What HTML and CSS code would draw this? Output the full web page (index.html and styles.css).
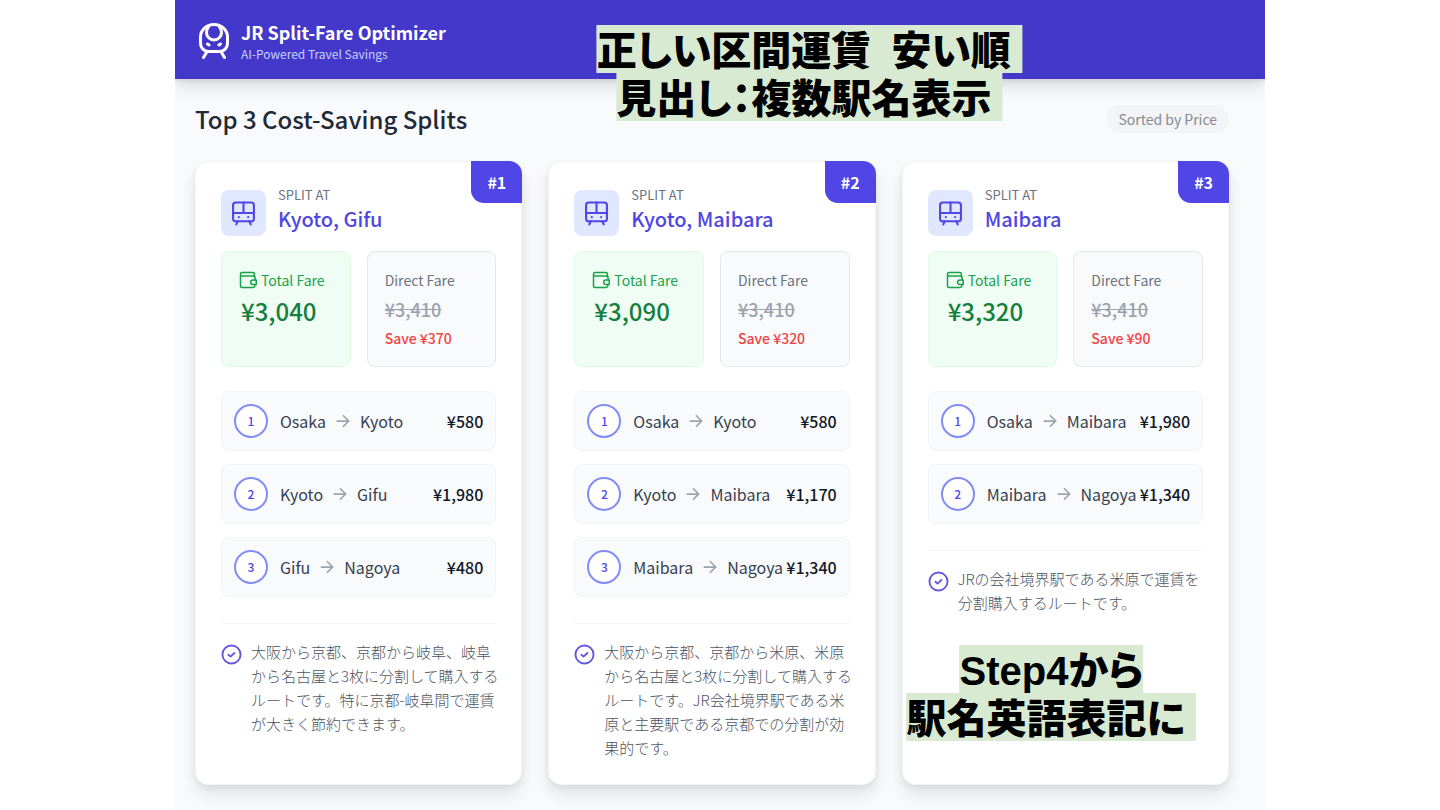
FILE: index.html
```html
<!DOCTYPE html>
<html lang="ja">
<head>
<meta charset="utf-8">
<meta name="viewport" content="width=device-width, initial-scale=1">
<title>JR Split-Fare Optimizer</title>
<link rel="stylesheet" href="styles.css">
</head>
<body>
<svg class="sprite" aria-hidden="true">
  <symbol id="i-train" viewBox="0 0 24 24"><rect x="2" y="1.500" width="20" height="18" rx="2.500"/><path d="M12 1.500v10M2 11.500h20M7.500 15.500h.01M16.500 15.500h.01M6.500 19.500l-1.500 3M17.500 19.500l1.500 3"/></symbol>
  <symbol id="i-wallet" viewBox="0 0 24 24"><path d="M20.500 8V4a2 2 0 0 0-2-2H4a2 2 0 0 0-2 2v16a2 2 0 0 0 2 2h14.500a2.500 2.500 0 0 0 2.500-2.500V18M2 6.500h17.500a2 2 0 0 1 2 2V12"/><path d="M23 12h-4.500a3 3 0 0 0 0 6H23z"/></symbol>
  <symbol id="i-arrow" viewBox="0 0 16 16"><path d="M1.500 8h13M8.500 2l6 6-6 6"/></symbol>
  <symbol id="i-check" viewBox="0 0 22 22"><circle cx="11" cy="11" r="9.500"/><path d="M7.800 11.200l2.200 2 4-3.800"/></symbol>
</svg>
<div class="slide">
  <header class="topbar">
    <svg class="logo" viewBox="0 0 30 36" aria-hidden="true"><path d="M9.500 28.500h11a8 8 0 0 0 8-8V14a13.500 12.500 0 0 0-27 0v6.500a8 8 0 0 0 8 8z"/><path d="M9.500 4C7.500 6 7.500 8 7.500 9.500a7.500 7.500 0 0 0 15 0c0-1.500 0-3.500-2-5.500M8.500 21l1.500 1M21.500 21l-1.500 1M7.500 29.500l-3 5M22.500 29.500l3 5"/></svg>
    <div>
      <h1 class="brand">JR Split-Fare Optimizer</h1>
      <p class="tagline">AI-Powered Travel Savings</p>
    </div>
  </header>
  <main class="content">
    <div class="heading">
      <h2 class="title">Top 3 Cost-Saving Splits</h2>
      <span class="pill">Sorted by Price</span>
    </div>
    <div class="cards">
      <article class="card">
        <span class="rank">#1</span>
        <div class="split">
          <span class="tile"><svg class="train"><use href="#i-train"/></svg></span>
          <div class="place"><p class="eyebrow">SPLIT AT</p><h3 class="stations">Kyoto, Gifu</h3></div>
        </div>
        <div class="fares">
          <div class="fare total"><p class="label"><svg class="wallet"><use href="#i-wallet"/></svg>Total Fare</p><p class="price">¥3,040</p></div>
          <div class="fare direct"><p class="label">Direct Fare</p><p class="old"><del>¥3,410</del></p><p class="save">Save ¥370</p></div>
        </div>
        <ol class="legs">
          <li class="leg"><span class="num">1</span><span class="route">Osaka<svg class="arrow"><use href="#i-arrow"/></svg>Kyoto</span><b class="cost">¥580</b></li>
          <li class="leg"><span class="num">2</span><span class="route">Kyoto<svg class="arrow"><use href="#i-arrow"/></svg>Gifu</span><b class="cost">¥1,980</b></li>
          <li class="leg"><span class="num">3</span><span class="route">Gifu<svg class="arrow"><use href="#i-arrow"/></svg>Nagoya</span><b class="cost">¥480</b></li>
        </ol>
        <div class="note"><svg class="check"><use href="#i-check"/></svg><p>大阪から京都、京都から岐阜、岐阜<br>から名古屋と3枚に分割して購入する<br>ルートです。特に京都-岐阜間で運賃<br>が大きく節約できます。</p></div>
      </article>
      <article class="card">
        <span class="rank">#2</span>
        <div class="split">
          <span class="tile"><svg class="train"><use href="#i-train"/></svg></span>
          <div class="place"><p class="eyebrow">SPLIT AT</p><h3 class="stations">Kyoto, Maibara</h3></div>
        </div>
        <div class="fares">
          <div class="fare total"><p class="label"><svg class="wallet"><use href="#i-wallet"/></svg>Total Fare</p><p class="price">¥3,090</p></div>
          <div class="fare direct"><p class="label">Direct Fare</p><p class="old"><del>¥3,410</del></p><p class="save">Save ¥320</p></div>
        </div>
        <ol class="legs">
          <li class="leg"><span class="num">1</span><span class="route">Osaka<svg class="arrow"><use href="#i-arrow"/></svg>Kyoto</span><b class="cost">¥580</b></li>
          <li class="leg"><span class="num">2</span><span class="route">Kyoto<svg class="arrow"><use href="#i-arrow"/></svg>Maibara</span><b class="cost">¥1,170</b></li>
          <li class="leg"><span class="num">3</span><span class="route">Maibara<svg class="arrow"><use href="#i-arrow"/></svg>Nagoya</span><b class="cost">¥1,340</b></li>
        </ol>
        <div class="note"><svg class="check"><use href="#i-check"/></svg><p>大阪から京都、京都から米原、米原<br>から名古屋と3枚に分割して購入する<br>ルートです。JR会社境界駅である米<br>原と主要駅である京都での分割が効<br>果的です。</p></div>
      </article>
      <article class="card">
        <span class="rank">#3</span>
        <div class="split">
          <span class="tile"><svg class="train"><use href="#i-train"/></svg></span>
          <div class="place"><p class="eyebrow">SPLIT AT</p><h3 class="stations">Maibara</h3></div>
        </div>
        <div class="fares">
          <div class="fare total"><p class="label"><svg class="wallet"><use href="#i-wallet"/></svg>Total Fare</p><p class="price">¥3,320</p></div>
          <div class="fare direct"><p class="label">Direct Fare</p><p class="old"><del>¥3,410</del></p><p class="save">Save ¥90</p></div>
        </div>
        <ol class="legs">
          <li class="leg"><span class="num">1</span><span class="route">Osaka<svg class="arrow"><use href="#i-arrow"/></svg>Maibara</span><b class="cost">¥1,980</b></li>
          <li class="leg"><span class="num">2</span><span class="route">Maibara<svg class="arrow"><use href="#i-arrow"/></svg>Nagoya</span><b class="cost">¥1,340</b></li>
        </ol>
        <div class="note"><svg class="check"><use href="#i-check"/></svg><p>JRの会社境界駅である米原で運賃を<br>分割購入するルートです。</p></div>
      </article>
    </div>
  </main>
  <p class="callout callout-top"><mark>正しい区間運賃<span class="wide-space">　</span>安い順 </mark><mark>見出し：複数駅名表示 </mark></p>
  <p class="callout callout-step"><mark>Step4から</mark><mark>駅名英語表記に </mark></p>
</div>
</body>
</html>
```

FILE: styles.css
```css
* { box-sizing: border-box; }
body, h1, h2, h3, p, ol { margin: 0; padding: 0; }
body {
  background: #fff;
  color: #1f2937;
  font-family: "Noto Sans CJK JP", sans-serif;
  font-size: 14px;
  line-height: 24px;
}
svg { fill: none; stroke: currentColor; stroke-width: 2; stroke-linecap: round; stroke-linejoin: round; flex: none; }
.sprite { position: absolute; width: 0; height: 0; }

.slide {
  position: relative;
  width: 75.7%;
  min-height: 100vh;
  margin: 0 auto;
  background: #f9fafb;
  overflow: hidden;
}
.topbar {
  display: flex;
  align-items: center;
  gap: 12px;
  padding: 19px 24px 16px;
  background: #4338ca;
  color: #fff;
  box-shadow: 0 8px 16px rgba(0, 0, 0, .12), 0 2px 5px rgba(0, 0, 0, .08);
}
.logo { width: 30px; height: 36px; stroke-width: 3; }
.brand { font-size: 18px; font-weight: 700; line-height: 26px; }
.tagline { color: #c7d2fe; font-size: 12px; line-height: 18px; }

.content { padding: 24px 36px 25px 20px; }
.heading { display: flex; align-items: center; justify-content: space-between; margin-bottom: 26px; }
.title { font-size: 24px; font-weight: 500; line-height: 32px; }
.pill {
  padding: 2px 12px;
  border-radius: 14px;
  background: #f3f4f6;
  color: #858b95;
}

.cards { display: grid; grid-template-columns: repeat(3, minmax(0, 1fr)); gap: 26px; }
.card {
  position: relative;
  padding: 28px 25px 24px;
  border: 1px solid #f3f4f6;
  border-radius: 13px;
  background: #fff;
  box-shadow: 0 10px 18px rgba(0, 0, 0, .09), 0 3px 6px rgba(0, 0, 0, .06);
}
.rank {
  position: absolute;
  top: -1px;
  right: -1px;
  padding: 9px 16px;
  border-radius: 0 13px 0 13px;
  background: #4f46e5;
  color: #fff;
  font-size: 16px;
  font-weight: 700;
}
.split { display: flex; align-items: flex-end; gap: 12px; height: 46px; margin-bottom: 15px; }
.tile {
  display: grid;
  place-items: center;
  width: 45px;
  height: 46px;
  border-radius: 8px;
  background: #e0e7ff;
  color: #4f46e5;
}
.train { width: 25px; height: 27px; }
.place { padding-bottom: 3px; }
.eyebrow { color: #6b7280; font-size: 13px; line-height: 20px; }
.stations { color: #4f46e5; font-size: 20px; font-weight: 500; line-height: 28px; }

.fares { display: grid; grid-template-columns: 1fr 1fr; gap: 16px; margin-bottom: 24px; }
.fare { padding: 16px 17px 16px; border: 1px solid; border-radius: 8px; white-space: nowrap; }
.total { border-color: #dcfce7; background: #f0fdf4; color: #16a34a; }
.direct { display: grid; gap: 5px; border-color: #e5e7eb; background: #f9fafb; color: #6b7280; }
.label { display: flex; align-items: center; gap: 4px; }
.wallet { width: 18px; height: 18px; }
.price { padding-left: 2px; color: #15803d; font-size: 24px; font-weight: 500; line-height: 38px; }
.old { color: #9ca3af; font-size: 18px; font-weight: 500; }
.save { color: #ef4444; font-weight: 500; }

.legs { display: grid; gap: 13px; margin-bottom: 26px; list-style: none; }
.leg {
  display: flex;
  align-items: center;
  gap: 12px;
  padding: 12px;
  border: 1px solid #f3f4f6;
  border-radius: 8px;
  background: #f9fafb;
  white-space: nowrap;
}
.num {
  display: grid;
  place-items: center;
  width: 34px;
  height: 34px;
  flex: none;
  border: 2px solid #818cf8;
  border-radius: 50%;
  background: #fff;
  color: #4f46e5;
  font-size: 12px;
  font-weight: 500;
}
.route { display: flex; align-items: center; gap: 10px; flex: 1; min-width: 0; color: #374151; font-size: 16px; }
.arrow { width: 14px; height: 14px; color: #9ca3af; }
.cost { margin-left: -12px; color: #111827; font-size: 16px; font-weight: 500; }

.note {
  display: flex;
  gap: 9px;
  padding-top: 16px;
  border-top: 1px solid #f3f4f6;
  color: #4b5563;
  font-size: 15px;
  font-weight: 300;
  white-space: nowrap;
}
.check { width: 21px; height: 21px; margin-top: 4px; color: #6558df; }

.callout {
  position: absolute;
  display: flex;
  flex-direction: column;
  align-items: center;
  transform: translateX(-50%);
  font-family: "Liberation Sans", "Noto Sans CJK JP", sans-serif;
  font-size: 40px;
  font-weight: 900;
  line-height: 44px;
  font-feature-settings: "palt";
  white-space: pre;
}
.callout mark { padding-top: 4px; background: #d9ead3; color: #000; }
.wide-space { display: inline-block; width: 20px; overflow: hidden; vertical-align: top; }
.callout-top { top: 25px; left: 58.2%; }
.callout-step { top: 645px; left: 80.4%; }
```
